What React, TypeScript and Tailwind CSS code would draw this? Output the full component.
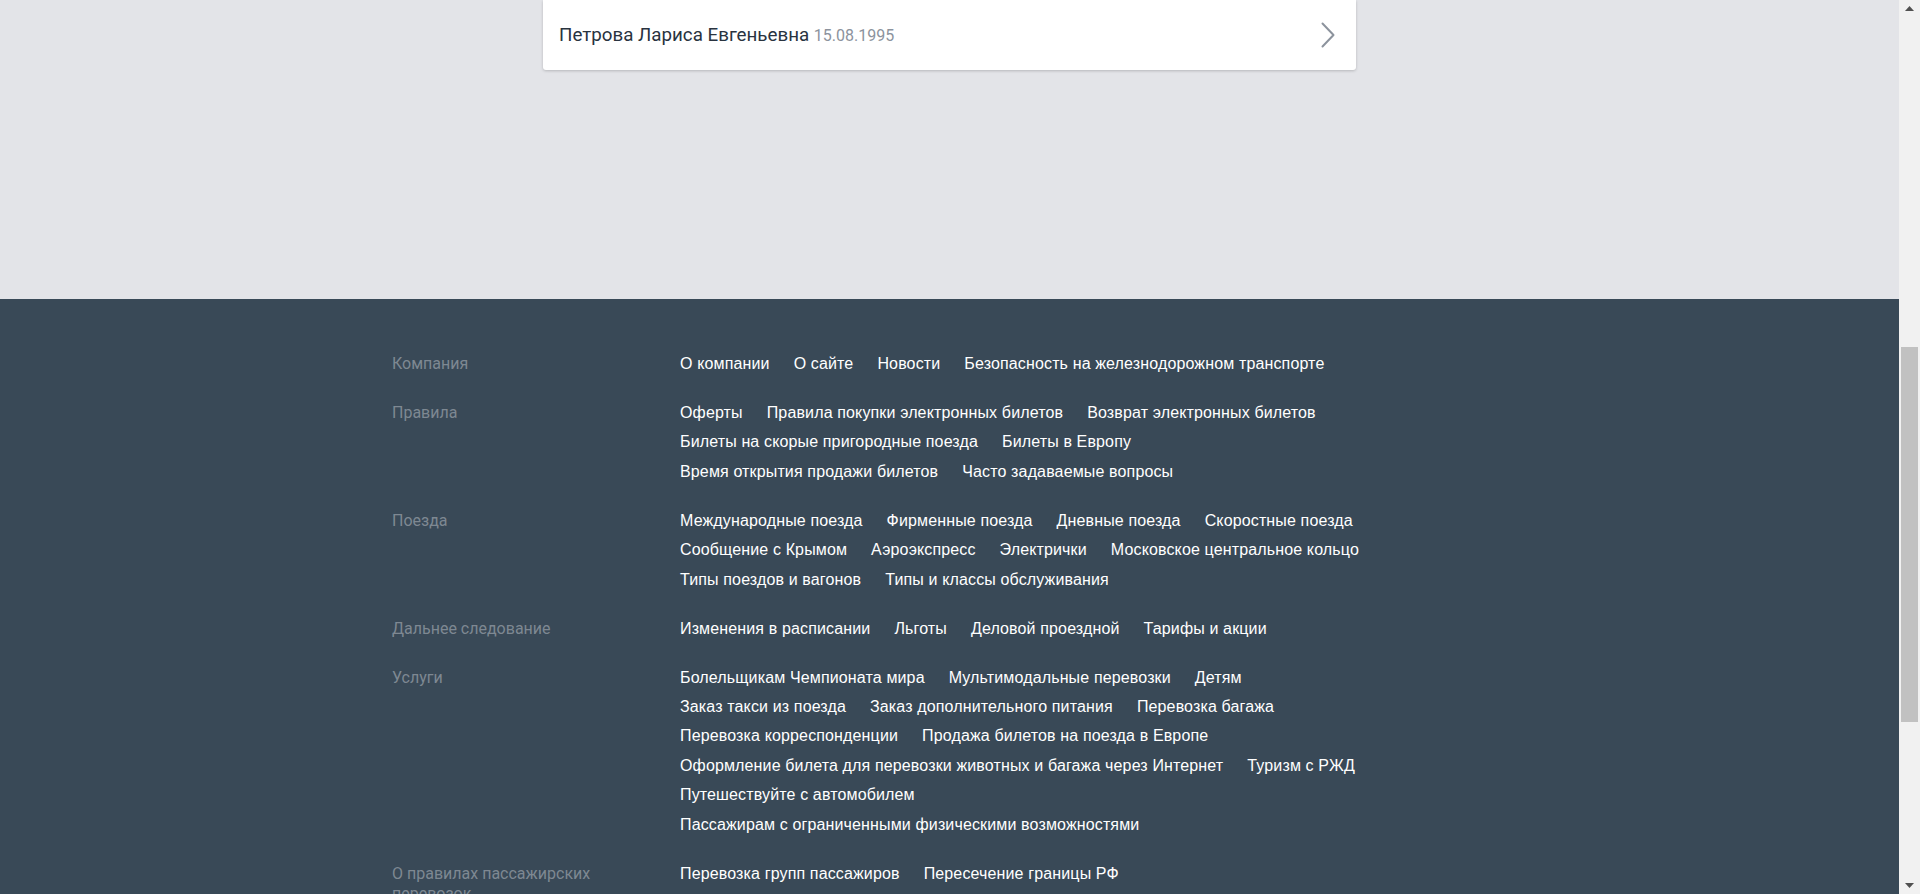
const groups: { title: string; links: string[] }[] = [
  {
    title: "Компания",
    links: ["О компании", "О сайте", "Новости", "Безопасность на железнодорожном транспорте"],
  },
  {
    title: "Правила",
    links: [
      "Оферты",
      "Правила покупки электронных билетов",
      "Возврат электронных билетов",
      "Билеты на скорые пригородные поезда",
      "Билеты в Европу",
      "Время открытия продажи билетов",
      "Часто задаваемые вопросы",
    ],
  },
  {
    title: "Поезда",
    links: [
      "Международные поезда",
      "Фирменные поезда",
      "Дневные поезда",
      "Скоростные поезда",
      "Сообщение с Крымом",
      "Аэроэкспресс",
      "Электрички",
      "Московское центральное кольцо",
      "Типы поездов и вагонов",
      "Типы и классы обслуживания",
    ],
  },
  {
    title: "Дальнее следование",
    links: ["Изменения в расписании", "Льготы", "Деловой проездной", "Тарифы и акции"],
  },
  {
    title: "Услуги",
    links: [
      "Болельщикам Чемпионата мира",
      "Мультимодальные перевозки",
      "Детям",
      "Заказ такси из поезда",
      "Заказ дополнительного питания",
      "Перевозка багажа",
      "Перевозка корреспонденции",
      "Продажа билетов на поезда в Европе",
      "Оформление билета для перевозки животных и багажа через Интернет",
      "Туризм с РЖД",
      "Путешествуйте с автомобилем",
      "Пассажирам с ограниченными физическими возможностями",
    ],
  },
  {
    title: "О правилах пассажирских перевозок",
    links: ["Перевозка групп пассажиров", "Пересечение границы РФ"],
  },
];

function Scrollbar() {
  return (
    <div className="flex flex-col w-[21px] h-full bg-[#f1f1f1] shrink-0">
      <div className="flex justify-center items-center h-[17px]">
        <svg width="9" height="5" viewBox="0 0 9 5">
          <polygon points="0,5 4.5,0 9,5" fill="#505050" />
        </svg>
      </div>
      <div className="h-[330px]" />
      <div className="h-[375px] mx-[2px] bg-[#c1c1c1]" />
      <div className="flex-1" />
      <div className="flex justify-center items-center h-[17px]">
        <svg width="9" height="5" viewBox="0 0 9 5">
          <polygon points="0,0 9,0 4.5,5" fill="#505050" />
        </svg>
      </div>
    </div>
  );
}

export default function App() {
  return (
    <div className="flex w-full h-screen overflow-hidden bg-[#e3e4e8]">
      <div className="flex flex-col flex-1 min-w-0">
        <section aria-label="Passengers" className="h-[299px] shrink-0">
          <div className="flex items-center justify-between w-[813px] h-[70px] mx-auto pl-4 pr-[21px] bg-white rounded-b-[3px] shadow-[0_1px_3px_rgba(0,0,0,0.2)] font-['Roboto',sans-serif]">
            <span className="text-[18.75px] text-[#29333f]">
              Петрова Лариса Евгеньевна{" "}
              <span className="text-base text-[#8c939d]">15.08.1995</span>
            </span>
            <svg width="14" height="26" viewBox="0 0 14 26" fill="none">
              <polyline
                points="1.5,1.5 12.5,13 1.5,24.5"
                stroke="#8c939d"
                strokeWidth="2"
                strokeLinecap="round"
                strokeLinejoin="round"
              />
            </svg>
          </div>
        </section>
        <footer className="flex-1 bg-[#394957] pt-[50px]">
          <div className="w-[1115px] mx-auto flex flex-col gap-y-[19.6px]">
            {groups.map((g) => (
              <div key={g.title} className="flex">
                <div className="w-[240px] mr-[48px] pt-[5px] text-base leading-[20px] text-[#7e8892] font-['Roboto',sans-serif]">
                  {g.title}
                </div>
                <ul className="flex flex-wrap w-[705px] gap-x-6 text-base leading-[29.4px] tracking-[0.14px] text-white font-['Liberation_Sans',Arial,sans-serif]">
                  {g.links.map((l) => (
                    <li key={l}>
                      <a href="#" className="hover:underline">
                        {l}
                      </a>
                    </li>
                  ))}
                </ul>
              </div>
            ))}
          </div>
        </footer>
      </div>
      <Scrollbar />
    </div>
  );
}
